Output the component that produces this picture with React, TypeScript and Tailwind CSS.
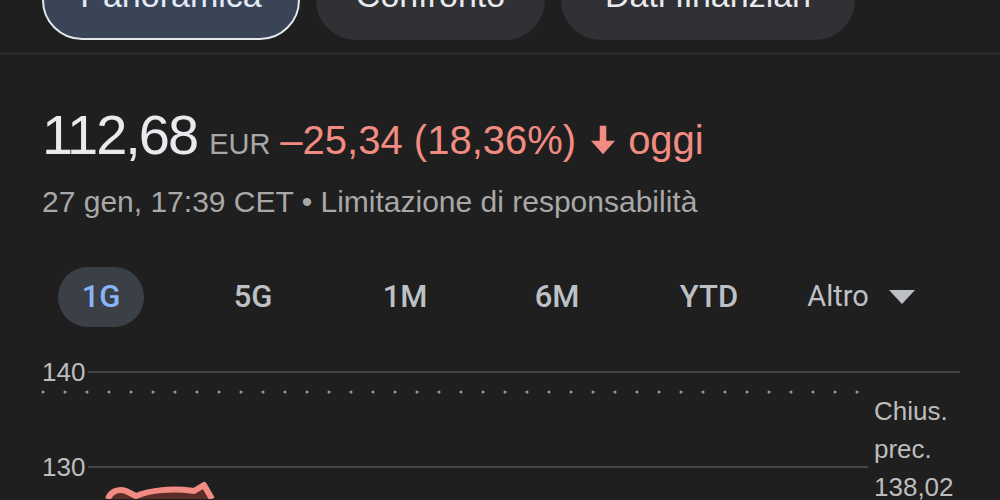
import { ReactNode } from "react";

const font = { fontFamily: '"Liberation Sans", Arial, sans-serif' };

function Chip({ children, active, width }: { children: ReactNode; active?: boolean; width: string }) {
  return (
    <div
      className={
        "h-[80px] rounded-full flex items-center justify-center pb-[10px] text-[34px] shrink-0 " +
        width +
        (active
          ? " bg-[#394457] border-2 border-[#e3e6ec] text-[#e3eaf7]"
          : " bg-[#303134] text-[#e8eaed]")
      }
    >
      {children}
    </div>
  );
}

function ArrowDown() {
  return (
    <svg viewBox="0 0 24 24" className="w-[34px] h-[34px]" fill="#f28b82">
      <path d="M9.7 2h4.6v10.5h6.2L12 22 3.5 12.5h6.2z" />
    </svg>
  );
}

const ranges = ["1G", "5G", "1M", "6M", "YTD"];

export default function App() {
  return (
    <div className="w-full h-[500px] overflow-hidden bg-[#1f1f1f] flex flex-col" style={font}>
      <div className="flex gap-4 pl-[42px] -mt-[40px]">
        <Chip active width="w-[258px]">Panoramica</Chip>
        <Chip width="w-[229px]">Confronto</Chip>
        <Chip width="w-[294px]">Dati finanziari</Chip>
      </div>
      <div className="mt-[12px] h-[3px] bg-[#282828]" />

      <div className="mt-[52px] pl-[42px] flex items-baseline leading-none whitespace-nowrap">
        <span className="text-[56px] tracking-[-2px] text-[#e8eaed]">112,68</span>
        <span className="ml-[12px] text-[29px] text-[#a8a8a8]">EUR</span>
        <span className="ml-[10px] text-[40px] text-[#f28b82]">–25,34 (18,36%)</span>
        <span className="ml-[10px] self-end mb-[6px]">
          <ArrowDown />
        </span>
        <span className="ml-[8px] text-[40px] text-[#f28b82]">oggi</span>
      </div>

      <div className="mt-[24px] pl-[42px] text-[30px] leading-none text-[#a8a8a8] whitespace-nowrap">
        27 gen, 17:39 CET • Limitazione di responsabilità
      </div>

      <div
        className="mt-[50px] ml-[25px] w-[912px] grid grid-cols-6 items-center"
        style={{ fontFamily: 'Roboto, "Liberation Sans", sans-serif' }}
      >
        {ranges.map((r, i) => (
          <div key={r} className="flex justify-center">
            <div
              className={
                "h-[60px] rounded-full flex items-center justify-center text-[31px] font-medium " +
                (i === 0 ? "w-[86px] bg-[#3b4047] text-[#8ab4f8]" : "px-4 text-[#bdc1c6]")
              }
            >
              {r}
            </div>
          </div>
        ))}
        <div className="flex justify-center items-center gap-[20px] h-[60px] text-[29px] text-[#bdc1c6]">
          <span>Altro</span>
          <svg viewBox="0 0 26 14" className="w-[26px] h-[14px]" fill="#bdc1c6">
            <path d="M0 0h26L13 14z" />
          </svg>
        </div>
      </div>

      <div className="mt-[27px] relative h-[145px] w-full shrink-0">
        <svg className="absolute inset-0" width="1000" height="145" viewBox="0 0 1000 145">
          <line x1="88" y1="18" x2="960" y2="18" stroke="#474747" strokeWidth="2" />
          <line x1="88" y1="113" x2="868" y2="113" stroke="#474747" strokeWidth="2" />
          <line x1="43" y1="38" x2="868" y2="38" stroke="#9a9a9a" strokeWidth="3" strokeDasharray="0 22" strokeLinecap="round" />
          <path d="M108 145 C110 138 118 134 126 137 L136 142 C150 136 172 134 194 137 L204 131 L212 145 Z" fill="#5a2c2a" />
          <path d="M108 145 C110 138 118 134 126 137 L136 142 C150 136 172 134 194 137 L204 131 L212 145" fill="none" stroke="#f28b82" strokeWidth="6" strokeLinejoin="round" />
        </svg>
        <span className="absolute left-[42px] top-[5px] text-[26px] leading-none text-[#bdbdbd]">140</span>
        <span className="absolute left-[42px] top-[100px] text-[26px] leading-none text-[#bdbdbd]">130</span>
        <div className="absolute left-[874px] top-[38px] text-[26px] leading-[38px] text-[#bdbdbd]">
          <div>Chius.</div>
          <div>prec.</div>
          <div>138,02</div>
        </div>
      </div>
    </div>
  );
}
